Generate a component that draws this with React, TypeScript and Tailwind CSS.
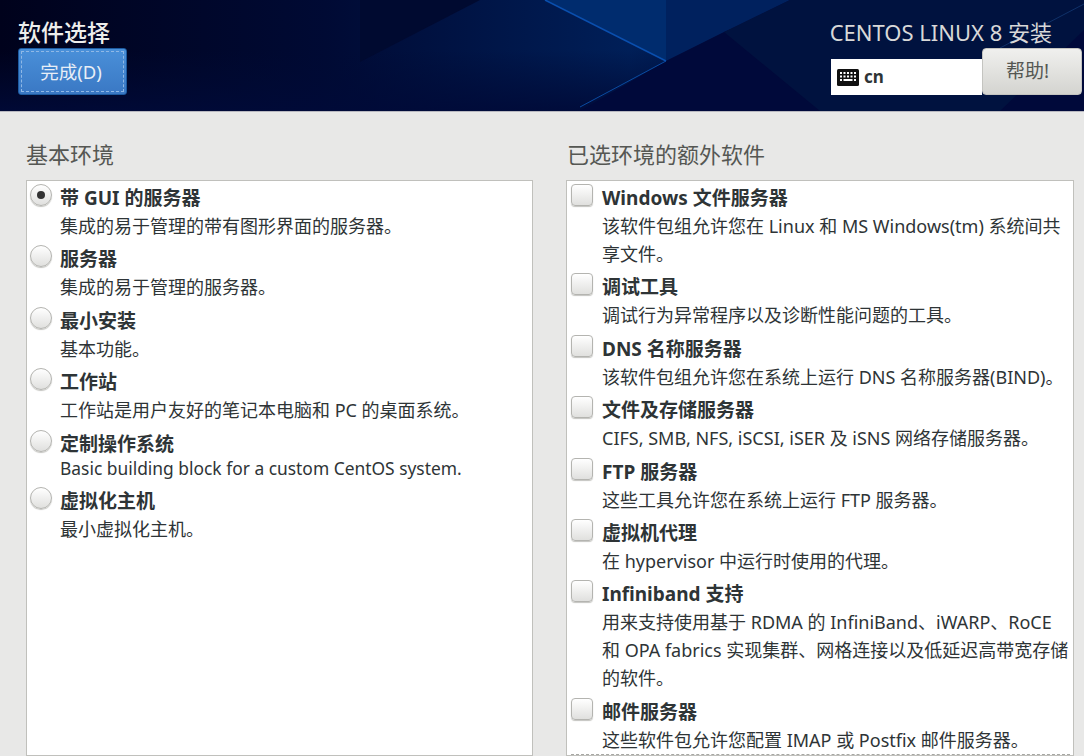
const FONT = 'font-["Noto_Sans","Noto_Sans_CJK_SC",sans-serif]';

type Item = { title: string; desc: string[]; latin?: boolean };

const environments: Item[] = [
  { title: '带 GUI 的服务器', desc: ['集成的易于管理的带有图形界面的服务器。'] },
  { title: '服务器', desc: ['集成的易于管理的服务器。'] },
  { title: '最小安装', desc: ['基本功能。'] },
  { title: '工作站', desc: ['工作站是用户友好的笔记本电脑和 PC 的桌面系统。'] },
  { title: '定制操作系统', desc: ['Basic building block for a custom CentOS system.'], latin: true },
  { title: '虚拟化主机', desc: ['最小虚拟化主机。'] },
];

const addons: Item[] = [
  { title: 'Windows 文件服务器', desc: ['该软件包组允许您在 Linux 和 MS Windows(tm) 系统间共', '享文件。'] },
  { title: '调试工具', desc: ['调试行为异常程序以及诊断性能问题的工具。'] },
  { title: 'DNS 名称服务器', desc: ['该软件包组允许您在系统上运行 DNS 名称服务器(BIND)。'] },
  { title: '文件及存储服务器', desc: ['CIFS, SMB, NFS, iSCSI, iSER 及 iSNS 网络存储服务器。'] },
  { title: 'FTP 服务器', desc: ['这些工具允许您在系统上运行 FTP 服务器。'] },
  { title: '虚拟机代理', desc: ['在 hypervisor 中运行时使用的代理。'] },
  {
    title: 'Infiniband 支持',
    desc: ['用来支持使用基于 RDMA 的 InfiniBand、iWARP、RoCE', '和 OPA fabrics 实现集群、网格连接以及低延迟高带宽存储', '的软件。'],
  },
  { title: '邮件服务器', desc: ['这些软件包允许您配置 IMAP 或 Postfix 邮件服务器。'] },
];

function HeaderArt() {
  return (
    <svg className="absolute inset-0 h-full w-full" viewBox="0 0 1084 111" preserveAspectRatio="none">
      <defs>
        <linearGradient id="base" x1="0" x2="1" y1="0" y2="0">
          <stop offset="0" stopColor="#00021c" />
          <stop offset="0.3" stopColor="#000a34" />
          <stop offset="0.58" stopColor="#001f58" />
          <stop offset="0.72" stopColor="#001040" />
          <stop offset="1" stopColor="#00103f" />
        </linearGradient>
        <linearGradient id="fade" x1="0" x2="0" y1="0" y2="1">
          <stop offset="0.45" stopColor="#000a34" stopOpacity="0" />
          <stop offset="1" stopColor="#000a38" stopOpacity="0.9" />
        </linearGradient>
      </defs>
      <rect width="1084" height="111" fill="url(#base)" />
      <rect width="1084" height="111" fill="url(#fade)" />
      <polygon points="360,0 480,0 360,62" fill="#000a30" />
      <polygon points="545,0 666,61 666,0" fill="#002c6e" />
      <polygon points="666,0 790,0 666,61" fill="#00215e" />
      <polygon points="666,61 724,32 800,0 1084,0 1084,111 580,111" fill="#00093a" />
      <polygon points="724,32 790,0 1084,0 1084,30 1000,111 820,111" fill="#00123f" />
      <line x1="545" y1="0" x2="666" y2="61" stroke="#0a4fae" strokeWidth="1.5" />
      <line x1="666" y1="61" x2="580" y2="107" stroke="#0a4aa0" strokeWidth="1" />
      <line x1="1084" y1="4" x2="1000" y2="48" stroke="#0f3168" strokeWidth="1" />
    </svg>
  );
}

function Radio({ checked }: { checked?: boolean }) {
  return (
    <span className="flex h-[22px] w-[22px] shrink-0 items-center justify-center rounded-full border border-[#b4b4b0] bg-gradient-to-b from-[#ffffff] to-[#e0e0de] shadow-[0_1px_1px_#c4c4c0]">
      {checked && <span className="h-[8px] w-[8px] rounded-full bg-[#333333]" />}
    </span>
  );
}

function Checkbox() {
  return (
    <span className="mr-[1px] h-[22px] w-[22px] shrink-0 rounded-[4px] border border-[#b4b4b0] bg-gradient-to-b from-[#ffffff] to-[#e0e0de] shadow-[0_1px_1px_#c4c4c0]" />
  );
}

function Row({ item, indicator, focused }: { item: Item; indicator: React.ReactNode; focused?: boolean }) {
  return (
    <div className={focused ? 'mr-[3px] flex gap-[8px] border-b border-dashed border-[#a8a8a4]' : 'flex gap-[8px] pb-[5.4px]'}>
      {indicator}
      <div className="min-w-0">
        <div className="h-[28px] text-[19px] leading-[28px] font-bold whitespace-nowrap text-[#2e3436]">{item.title}</div>
        {item.desc.map((line) => (
          <div
            key={line}
            className={
              item.latin
                ? 'h-[24px] text-[17.4px] leading-[20px] whitespace-nowrap text-[#2e3436]'
                : 'h-[28px] text-[18px] leading-[28px] whitespace-nowrap text-[#2e3436]'
            }
          >
            {line}
          </div>
        ))}
      </div>
    </div>
  );
}

export default function App() {
  return (
    <div className={`${FONT} flex h-screen flex-col overflow-hidden bg-[#e8e8e7]`}>
      <header className="relative flex h-[112px] shrink-0 justify-between border-b border-[#b8b8c0] bg-[#000a34] pt-[18px] pr-[2px] pl-[18px]">
        <HeaderArt />
        <div className="relative flex flex-col">
          <h1 className="h-[30px] text-[23px] leading-[29px] font-medium text-[#eeeeec]">软件选择</h1>
          <button className="flex h-[47px] w-[109px] items-center justify-center rounded-[3px] border border-[#1c5aa0] bg-gradient-to-b from-[#4a90d9] to-[#3a78c4] p-[2px] text-[18.5px] text-[#e8eef6]">
            <span className="flex h-full w-full items-center justify-center border border-dashed border-[#8fb8e6] pr-[3px]">完成(D)</span>
          </button>
        </div>
        <div className="relative flex flex-col items-end">
          <div className="mr-[30px] h-[30px] text-[22px] leading-[29px] text-[#d8d8d8]">CENTOS LINUX 8 安装</div>
          <div className="flex items-start">
            <div className="mt-[11px] flex h-[36px] w-[151px] items-center gap-[5px] bg-white pl-[6px] text-[17px] font-bold text-[#2e3436]">
              <svg width="22" height="17" viewBox="0 0 22 17">
                <rect width="22" height="17" rx="1.5" fill="#111111" />
                <g fill="#ffffff">
                  <rect x="3" y="3" width="2" height="2" />
                  <rect x="6.5" y="3" width="2" height="2" />
                  <rect x="10" y="3" width="2" height="2" />
                  <rect x="13.5" y="3" width="2" height="2" />
                  <rect x="17" y="3" width="2" height="2" />
                  <rect x="3" y="6.5" width="2" height="2" />
                  <rect x="6.5" y="6.5" width="2" height="2" />
                  <rect x="10" y="6.5" width="2" height="2" />
                  <rect x="13.5" y="6.5" width="2" height="2" />
                  <rect x="17" y="6.5" width="2" height="2" />
                  <rect x="3" y="10" width="2" height="2" />
                  <rect x="6.5" y="10" width="9" height="2" />
                  <rect x="17" y="10" width="2" height="2" />
                </g>
              </svg>
              cn
            </div>
            <button className="h-[47px] w-[100px] rounded-[4px] border border-[#c4c4c0] bg-gradient-to-b from-[#f0f0ee] to-[#d4d4d0] pr-[9px] text-[19px] text-[#555753]">
              帮助!
            </button>
          </div>
        </div>
      </header>

      <main className="flex min-h-0 flex-1 gap-[33px] pr-[10px] pl-[26px]">
        <section className="flex w-[507px] flex-col">
          <h2 className="flex h-[68px] shrink-0 items-end pb-[12px] text-[22px] leading-[28px] text-[#555753]">基本环境</h2>
          <div className="flex-1 border border-[#c0c0bc] bg-white pt-[3px] pl-[3px]">
            {environments.map((item, i) => (
              <Row key={item.title} item={item} indicator={<Radio checked={i === 0} />} />
            ))}
          </div>
        </section>
        <section className="flex w-[508px] flex-col">
          <h2 className="flex h-[68px] shrink-0 items-end pb-[12px] pl-[1px] text-[22px] leading-[28px] text-[#555753]">已选环境的额外软件</h2>
          <div className="flex-1 overflow-hidden border border-[#c0c0bc] bg-white pt-[3px] pl-[4px]">
            {addons.map((item, i) => (
              <Row key={item.title} item={item} indicator={<Checkbox />} focused={i === addons.length - 1} />
            ))}
          </div>
        </section>
      </main>
    </div>
  );
}
